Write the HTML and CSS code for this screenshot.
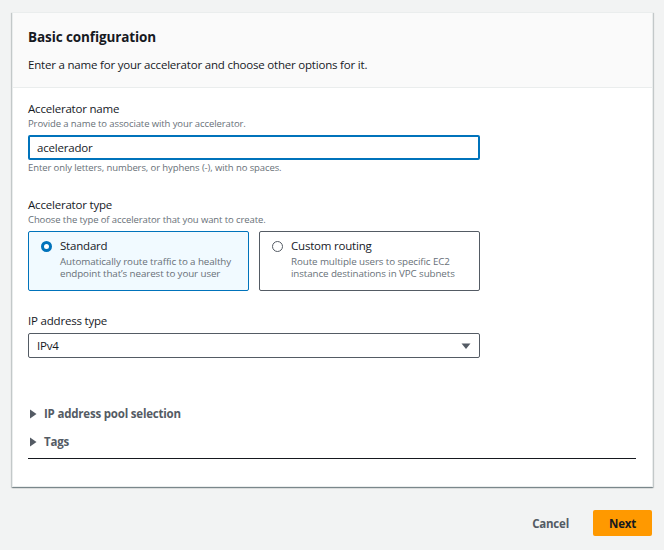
FILE: index.html
```html
<!DOCTYPE html>
<html>
<head>
<meta charset="utf-8">
<link rel="stylesheet" href="styles.css">
</head>
<body>
<div class="page">
  <section class="card">
    <header class="card-head">
      <h2 class="title">Basic configuration</h2>
      <p class="desc">Enter a name for your accelerator and choose other options for it.</p>
    </header>
    <div class="card-body">
      <div class="field">
        <div class="label">Accelerator name</div>
        <div class="hint">Provide a name to associate with your accelerator.</div>
        <div class="input focused">acelerador</div>
        <div class="hint after">Enter only letters, numbers, or hyphens (-), with no spaces.</div>
      </div>
      <div class="field f2">
        <div class="label">Accelerator type</div>
        <div class="hint">Choose the type of accelerator that you want to create.</div>
        <div class="tiles">
          <div class="tile selected">
            <span class="radio on"></span>
            <div class="tile-text">
              <div class="tile-title">Standard</div>
              <div class="tile-desc">Automatically route traffic to a healthy endpoint that’s nearest to your user</div>
            </div>
          </div>
          <div class="tile">
            <span class="radio"></span>
            <div class="tile-text">
              <div class="tile-title">Custom routing</div>
              <div class="tile-desc">Route multiple users to specific EC2 instance destinations in VPC subnets</div>
            </div>
          </div>
        </div>
      </div>
      <div class="field f3">
        <div class="label">IP address type</div>
        <div class="input select">IPv4
          <svg class="caret" width="10" height="8" viewBox="0 0 10 8"><path d="M0.5 1.5h9L5 7z" fill="#545b64"/></svg>
        </div>
      </div>
      <div class="expanders">
        <div class="exp"><svg width="8" height="10" viewBox="0 0 8 10"><path d="M1 0.5v9L7.5 5z" fill="#545b64"/></svg><span>IP address pool selection</span></div>
        <div class="exp"><svg width="8" height="10" viewBox="0 0 8 10"><path d="M1 0.5v9L7.5 5z" fill="#545b64"/></svg><span>Tags</span></div>
      </div>
      <div class="rule"></div>
    </div>
  </section>
  <div class="actions">
    <span class="link-btn">Cancel</span>
    <span class="primary">Next</span>
  </div>
</div>
</body>
</html>
```
FILE: styles.css
```css
* { box-sizing: border-box; }
html, body { margin: 0; padding: 0; }
body {
  background: #f2f3f3;
  font-family: "Open Sans", "Liberation Sans", sans-serif;
  color: #16191f;
  width: 664px;
  height: 550px;
  overflow: hidden;
}
.page { padding: 12px 12px 0 12px; }
.card {
  background: #fff;
  border: 1px solid #eaeded;
  box-shadow: 0 1px 1px 0 rgba(0,28,36,0.3), 1px 1px 1px 0 rgba(0,28,36,0.15), -1px 1px 1px 0 rgba(0,28,36,0.15);
  width: 641px;
}
.card-head {
  background: #fafafa;
  border-bottom: 1px solid #eaeded;
  padding: 15px 15px 13px 15px;
  height: 75px;
}
.title {
  margin: 0;
  font-size: 13.5px;
  font-weight: 700;
  line-height: 18px;
  letter-spacing: -0.1px;
}
.desc {
  margin: 11px 0 0 0;
  font-size: 11.5px;
  line-height: 16px;
  letter-spacing: -0.2px;
}
.card-body {
  padding: 13px 15px 27px 15px;
}
.label {
  font-size: 11.5px;
  line-height: 16px;
  letter-spacing: -0.2px;
}
.hint {
  font-size: 9.5px;
  line-height: 14px;
  color: #687078;
  letter-spacing: -0.1px;
}
.hint.after { margin-top: 1px; }
.input {
  margin-top: 4px;
  width: 452px;
  height: 25px;
  border: 1px solid #687078;
  border-radius: 2px;
  font-size: 11.5px;
  line-height: 23px;
  padding: 0 8px;
  position: relative;
  letter-spacing: -0.2px;
}
.input.focused {
  border: 2px solid #0073bb;
  padding: 0 7px;
  line-height: 21px;
}
.f2 { margin-top: 22px; }
.tiles {
  margin-top: 4px;
  display: flex;
  gap: 10px;
}
.tile {
  width: 221px;
  height: 60px;
  border: 1px solid #545b64;
  border-radius: 2px;
  display: flex;
  padding: 7px 12px 0 12px;
  gap: 8px;
}
.tile.selected {
  background: #f1faff;
  border-color: #0073bb;
}
.radio {
  flex: none;
  width: 11px;
  height: 11px;
  margin-top: 2px;
  border-radius: 50%;
  border: 1px solid #545b64;
  background: #fff;
}
.radio.on {
  border: 3.5px solid #0073bb;
}
.tile-title {
  font-size: 11.5px;
  line-height: 14px;
  letter-spacing: -0.2px;
}
.tile-desc {
  font-size: 9.8px;
  line-height: 12px;
  color: #687078;
  margin-top: 3px;
  letter-spacing: -0.1px;
}
.f3 { margin-top: 22px; }
.select { border-color: #545b64; }
.caret { position: absolute; right: 8px; top: 8px; }
.expanders {
  margin-top: 48px;
  display: flex;
  flex-direction: column;
  gap: 12px;
}
.exp {
  display: flex;
  align-items: center;
  gap: 7px;
  padding-left: 1px;
  font-size: 11.5px;
  font-weight: 700;
  line-height: 16px;
  color: #545b64;
  letter-spacing: -0.2px;
}
.rule {
  margin-top: 8px;
  border-top: 1px solid #16191f;
  width: 608px;
}
.actions {
  display: flex;
  justify-content: flex-end;
  align-items: center;
  gap: 24px;
  margin-top: 23px;
}
.link-btn {
  font-size: 11.5px;
  font-weight: 700;
  color: #545b64;
  letter-spacing: -0.2px;
}
.primary {
  background: #ff9900;
  border-radius: 2px;
  width: 59px;
  height: 26px;
  display: flex;
  align-items: center;
  justify-content: center;
  font-size: 11.5px;
  font-weight: 700;
  color: #16191f;
  letter-spacing: -0.2px;
}
```
